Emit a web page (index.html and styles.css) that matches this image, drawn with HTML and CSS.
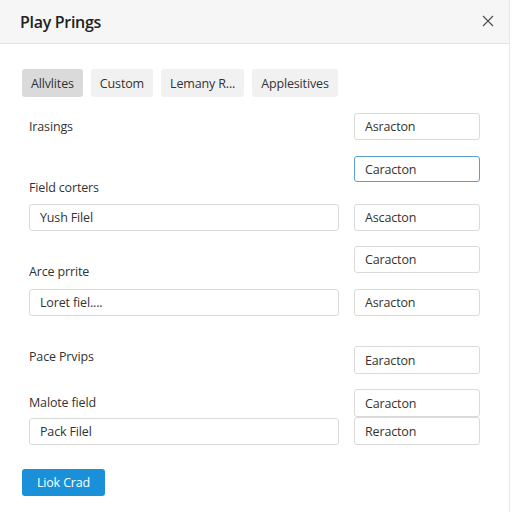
FILE: index.html
```html
<!DOCTYPE html>
<html>
<head>
<meta charset="utf-8">
<link rel="stylesheet" href="styles.css">
</head>
<body>
<div class="dialog">
  <div class="header">
    <div class="title">Play Prings</div>
    <svg class="close" width="12" height="12" viewBox="0 0 12 12"><path d="M1 1L11 11M11 1L1 11" stroke="#555" stroke-width="1.3" fill="none"/></svg>
  </div>
  <div class="body">
    <div class="tabs">
      <div class="tab active">Allvlites</div>
      <div class="tab">Custom</div>
      <div class="tab">Lemany R...</div>
      <div class="tab">Applesitives</div>
    </div>
    <div class="form">
      <div class="row row-a">
        <div class="label">Irasings</div>
        <div class="input">Asracton</div>
      </div>
      <div class="row row-b">
        <div class="label bottom">Field corters</div>
        <div class="input focus top">Caracton</div>
      </div>
      <div class="row row-c">
        <div class="input">Yush Filel</div>
        <div class="input">Ascacton</div>
      </div>
      <div class="row row-d">
        <div class="label bottom">Arce prrite</div>
        <div class="input top">Caracton</div>
      </div>
      <div class="row row-e">
        <div class="input">Loret fiel....</div>
        <div class="input">Asracton</div>
      </div>
      <div class="row row-f">
        <div class="label top pad">Pace Prvips</div>
        <div class="input">Earacton</div>
      </div>
      <div class="row row-g">
        <div class="label">Malote field</div>
        <div class="input">Caracton</div>
      </div>
      <div class="row row-h">
        <div class="input">Pack Filel</div>
        <div class="input">Reracton</div>
      </div>
    </div>
    <button class="primary">Liok Crad</button>
  </div>
</div>
</body>
</html>
```
FILE: styles.css
```css
html, body {
  margin: 0;
  padding: 0;
  background: #ffffff;
}
body {
  font-family: "Open Sans", "Liberation Sans", sans-serif;
  color: #333333;
  font-size: 12.5px;
  letter-spacing: -0.15px;
}
.dialog {
  width: 510px;
  height: 512px;
  border-right: 1px solid #e6e6e6;
  box-sizing: border-box;
}
.header {
  height: 43px;
  background: #f6f6f6;
  border-bottom: 1px solid #e4e4e4;
  display: flex;
  align-items: center;
  justify-content: space-between;
  padding: 0 15px 0 20px;
}
.title {
  font-size: 16px;
  font-weight: 600;
  color: #222222;
  letter-spacing: -0.3px;
}
.close {
  display: block;
  margin-top: -1px;
}
.body {
  padding: 25px 0 0 22px;
}
.tabs {
  display: flex;
  gap: 8px;
  height: 28px;
}
.tab {
  display: flex;
  align-items: center;
  padding: 0 9px;
  background: #f1f1f1;
  border-radius: 3px;
  color: #333333;
}
.tab.active {
  background: #dadada;
}
.form {
  margin: 16px 0 0 7px;
}
.row {
  display: grid;
  grid-template-columns: 310px 126px;
  column-gap: 15px;
}
.label {
  align-self: center;
  line-height: 16px;
  color: #333333;
}
.label.bottom {
  align-self: end;
}
.row-b .label.bottom {
  margin-bottom: 2px;
}
.label.top {
  align-self: start;
}
.label.pad {
  margin-top: 3px;
}
.input {
  box-sizing: border-box;
  height: 27px;
  border: 1px solid #dadada;
  border-radius: 3px;
  padding-left: 10px;
  display: flex;
  align-items: center;
  color: #333333;
  background: #ffffff;
}
.input.top {
  align-self: start;
}
.input.focus {
  border-color: #5b9fd0;
  height: 26px;
}
.row-a { height: 27px; }
.row-b { height: 42px; margin-top: 16px; }
.row-c { margin-top: 6px; }
.row-d { height: 34px; margin-top: 15px; }
.row-e { margin-top: 9px; }
.row-f { margin-top: 30px; }
.row-f .input { height: 28px; }
.row-g { margin-top: 15px; }
.row-g .input { height: 28px; }
.row-h .input { height: 28px; }
.row-h .input:first-child { height: 27px; margin-top: 1px; }
.primary {
  margin-top: 24px;
  width: 83px;
  height: 27px;
  background: #1990d7;
  color: #ffffff;
  border: none;
  border-radius: 3px;
  font-family: "Open Sans", "Liberation Sans", sans-serif;
  font-size: 12.5px;
  font-weight: 500;
  letter-spacing: -0.15px;
  padding: 0;
}
```
